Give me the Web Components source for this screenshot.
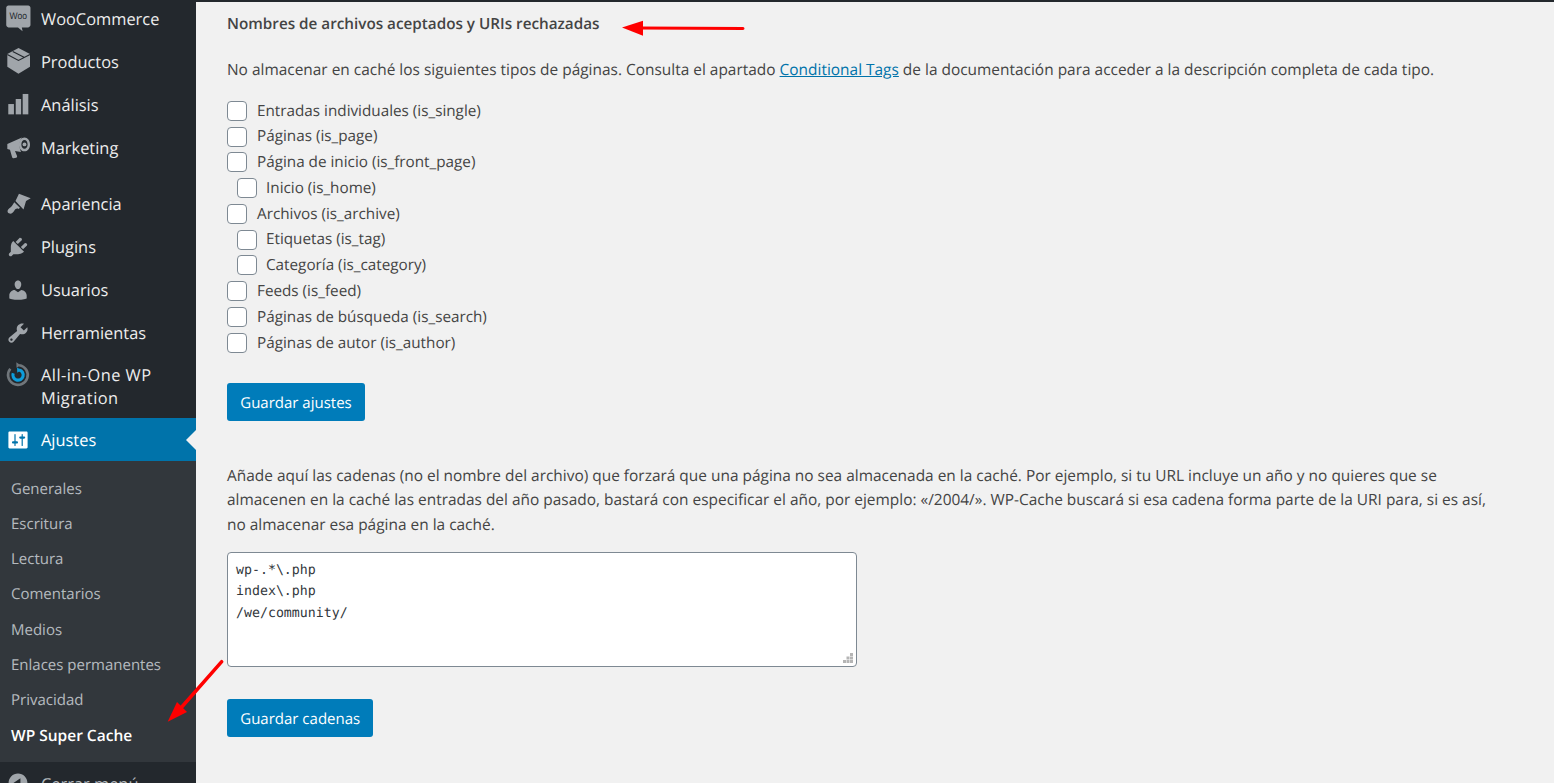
<!DOCTYPE html>
<html lang="es">
<head>
<meta charset="utf-8">
<title>WP Super Cache</title>
<style>
  html, body { margin: 0; height: 783px; overflow: hidden; background: #f1f1f1; }
  body { font-family: "Open Sans", "Noto Sans", sans-serif; text-rendering: geometricPrecision; }
</style>
</head>
<body>

<admin-page>
  <admin-menu slot="menu">
    <menu-item icon="woo">WooCommerce</menu-item>
    <menu-item icon="box">Productos</menu-item>
    <menu-item icon="bars">Análisis</menu-item>
    <menu-item icon="megaphone">Marketing</menu-item>
    <menu-item icon="brush" class="first">Apariencia</menu-item>
    <menu-item icon="plug">Plugins</menu-item>
    <menu-item icon="user">Usuarios</menu-item>
    <menu-item icon="wrench">Herramientas</menu-item>
    <menu-item icon="migrate" tall>All-in-One WP Migration</menu-item>
    <menu-item icon="sliders" active>Ajustes</menu-item>
    <sub-menu>
      <sub-item>Generales</sub-item>
      <sub-item>Escritura</sub-item>
      <sub-item>Lectura</sub-item>
      <sub-item>Comentarios</sub-item>
      <sub-item>Medios</sub-item>
      <sub-item>Enlaces permanentes</sub-item>
      <sub-item>Privacidad</sub-item>
      <sub-item current>WP Super Cache</sub-item>
    </sub-menu>
    <menu-item icon="collapse" dim>Cerrar menú</menu-item>
  </admin-menu>

  <cache-settings>
    <h-title>Nombres de archivos aceptados y URIs rechazadas</h-title>
    <p-text class="intro">No almacenar en caché los siguientes tipos de páginas. Consulta el apartado <a-link>Conditional Tags</a-link> de la documentación para acceder a la descripción completa de cada tipo.</p-text>
    <check-list>
      <check-row>Entradas individuales (is_single)</check-row>
      <check-row>Páginas (is_page)</check-row>
      <check-row>Página de inicio (is_front_page)</check-row>
      <check-row child>Inicio (is_home)</check-row>
      <check-row>Archivos (is_archive)</check-row>
      <check-row child>Etiquetas (is_tag)</check-row>
      <check-row child>Categoría (is_category)</check-row>
      <check-row>Feeds (is_feed)</check-row>
      <check-row>Páginas de búsqueda (is_search)</check-row>
      <check-row>Páginas de autor (is_author)</check-row>
    </check-list>
    <wp-button class="save-one">Guardar ajustes</wp-button>
    <p-text class="strings">Añade aquí las cadenas (no el nombre del archivo) que forzará que una página no sea almacenada en la caché. Por ejemplo, si tu URL incluye un año y no quieres que se almacenen en la caché las entradas del año pasado, bastará con especificar el año, por ejemplo: «/2004/». WP-Cache buscará si esa cadena forma parte de la URI para, si es así, no almacenar esa página en la caché.</p-text>
    <code-box>wp-.*\.php
index\.php
/we/community/</code-box>
    <wp-button class="save-two">Guardar cadenas</wp-button>
  </cache-settings>

  <red-arrows></red-arrows>
</admin-page>

<script>
//ICONS
//dashicons on a 20 box, the odd ones are drawn by hand
const ICONS = {
    woo: `<path d="M2 -1.2H18.500C19.500 -1.2 20.400 -.3 20.400 .7V15.100C20.400 16.100 19.500 17 18.500 17H13.200L13.800 20.300 10 17H2C1 17 .2 16.100 .2 15.100V.7C.2 -.3 1 -1.200 2 -1.200z"/><text x="10.200" y="10.300" text-anchor="middle" font-family="Liberation Sans" font-size="8" textLength="14.500" lengthAdjust="spacingAndGlyphs" fill="#23282d">Woo</text>`,
    box: `<path d="M10.400 -1.700L20 3.300V14L10.400 19.700 1.100 14V3.300z"/><path d="M1.100 3.800L10.400 8.700 20 3.800M5.600 1.300L15 6.100" stroke="#23282d" stroke-width="1" fill="none"/>`,
    bars: `<rect x="1.900" y="9.200" width="4.700" height="8.600"/><rect x="8.100" y="5" width="4.500" height="12.800"/><rect x="13.900" y=".8" width="4.700" height="17"/>`,
    megaphone: `<path d="M1.100 6.700L13.300 1.200C12 3.200 11.200 5.200 11.200 7.200 11.200 9.400 11.800 11.400 12.500 13.300L7.500 12.600 9.200 16.700C9.400 17.400 9.100 17.900 8.500 18.100L6.400 18.500C5.800 18.600 5.300 18.300 5.100 17.800L3.300 11.400 1.100 10.800z"/><path fill-rule="evenodd" d="M15.400 1.200C18 1.200 20 3.800 20 7S18 12.800 15.400 12.800 10.800 10.200 10.800 7 12.800 1.200 15.400 1.200zM15.400 3.400C13.900 3.400 12.800 5 12.800 7S13.900 10.600 15.400 10.600 18 9 18 7 16.900 3.400 15.400 3.400z"/><circle cx="15.400" cy="7" r="1.600"/>`,
    brush: `<path d="M10.800 1.400L20.600 5.250 16.700 7.500 14.600 14.600 7.900 7.500z"/><path d="M6.900 8.600L11.600 13.200 10.600 14.200C9 13.400 8 14 7 15.400 6 17 4.600 18.400 3 18 1.200 17.600 .8 16 1.800 14.600 3 13 5 12.200 5.600 10.600z"/>`,
    plug: `<path d="M13.110 4.360L9.870 7.600 8 5.730l3.240-3.240c.35-.34 1.050-.2 1.560.32.52.51.66 1.210.31 1.550zm-8 1.770l.91-1.120 9.010 9.010-1.190.84c-.71.71-2.630 1.160-3.820 1.160H6.140L4.900 17.260c-.59.59-1.540.59-2.120 0-.59-.58-.59-1.530 0-2.120l1.240-1.240v-3.880c0-1.130.4-3.190 1.090-3.890zm7.260 3.970l3.240-3.240c.34-.35 1.040-.21 1.550.31.52.51.66 1.210.31 1.550l-3.240 3.250z"/>`,
    user: `<path d="M10 9.250c-2.270 0-2.730-3.440-2.730-3.440C7 4.020 7.820 2 9.970 2c2.160 0 2.980 2.020 2.710 3.810 0 0-.41 3.440-2.680 3.440zm0 2.570L12.720 10c2.390 0 4.520 2.330 4.520 4.530v2.490s-3.650 1.130-7.240 1.130c-3.650 0-7.240-1.130-7.240-1.130v-2.490c0-2.250 1.940-4.480 4.470-4.480z"/>`,
    wrench: `<path d="M16.680 9.770c-1.340 1.340-3.300 1.670-4.950.99l-5.410 6.520c-.99.99-2.590.99-3.580 0s-.99-2.590 0-3.570l6.520-5.420c-.68-1.650-.35-3.610.99-4.950 1.280-1.280 3.120-1.620 4.720-1.060l-2.890 2.890 2.820 2.820 2.860-2.870c.53 1.580.18 3.390-1.080 4.670zM3.810 16.210c.4.39 1.040.39 1.430 0 .4-.4.4-1.040 0-1.430-.39-.4-1.030-.4-1.430 0-.39.39-.39 1.030 0 1.430z"/>`,
    migrate: `<path d="M11 1.900A8.200 8.200 0 1 1 3.600 4.800" fill="none" stroke="#70767b" stroke-width="2.200"/><path d="M8.600 -.6L12.200 1.800 8.800 4z" fill="#70767b"/><path d="M6 8.500A4.300 4.300 0 1 0 11 5.800" fill="none" stroke="#0d9ddb" stroke-width="2.600"/><path d="M9.200 3.800L12.800 5.900 9.400 8.200z" fill="#0d9ddb"/>`,
    sliders: `<path d="M18 16V4c0-.55-.45-1-1-1H3c-.55 0-1 .45-1 1v12c0 .55.45 1 1 1h14c.55 0 1-.45 1-1zM8 11h1c.55 0 1 .45 1 1s-.45 1-1 1H8v1.500c0 .28-.22.5-.5.5s-.5-.22-.5-.5V13H6c-.55 0-1-.45-1-1s.45-1 1-1h1V5.500c0-.28.22-.5.5-.5s.5.22.5.5V11zm5-2h-1c-.55 0-1-.45-1-1s.45-1 1-1h1V5.500c0-.28.22-.5.5-.5s.5.22.5.5V7h1c.55 0 1 .45 1 1s-.45 1-1 1h-1v5.500c0 .28-.22.5-.5.5s-.5-.22-.5-.5V9z"/>`,
    collapse: `<path d="M10 2.160c4.330 0 7.840 3.510 7.840 7.840s-3.510 7.840-7.840 7.840S2.160 14.330 2.160 10 5.710 2.160 10 2.160zm2 11.720V6.120L6.180 9.970z"/>`
};

//PAGE SHELL
class AdminPage extends HTMLElement {
    constructor() {
        super();
        this.attachShadow({ mode: "open" });
        this.shadowRoot.innerHTML = `
        <style>
            :host { display: block; position: relative; height: 783px; overflow: hidden; }
            .shell { display: flex; height: 100%; }
        </style>
        <div class="shell">
            <slot name="menu"></slot>
            <slot></slot>
        </div>`;
    }
}

//SIDEBAR
class AdminMenu extends HTMLElement {
    constructor() {
        super();
        this.attachShadow({ mode: "open" });
        this.shadowRoot.innerHTML = `
        <style>
            :host { display: block; flex: 0 0 196px; width: 196px; height: 783px; overflow: hidden; background: #23282d; }
            .list { margin-top: -3px; }
            ::slotted(.first) { margin-top: 13px; }
        </style>
        <div class="list"><slot></slot></div>`;
    }
}

class MenuItem extends HTMLElement {
    constructor() {
        super();
        this.attachShadow({ mode: "open" });
    }
    connectedCallback() {
        const icon = ICONS[this.getAttribute("icon")] || "";
        this.shadowRoot.innerHTML = `
        <style>
            :host { display: flex; align-items: center; min-height: 43px; color: #eee; font-size: 16.4px; line-height: 23px; }
            :host([active]) { background: #0073aa; color: #fff; position: relative; }
            :host([active])::after { content: ""; position: absolute; right: 0; top: 50%; margin-top: -10px;
                border: 10px solid transparent; border-right-color: #f1f1f1; border-left: 0; }
            :host([dim]) { color: #b4b9be; }
            :host([tall]) { min-height: 64px; align-items: flex-start; letter-spacing: .45px; }
            :host([tall]) svg { margin-top: 8.5px; }
            :host([tall]) .label { margin-top: 8.5px; }
            svg { flex: 0 0 24px; width: 24px; height: 24px; margin-left: 6px; fill: #a0a5aa; overflow: visible; }
            :host([active]) svg { fill: #fff; }
            .label { margin-left: 11px; padding: 0 14px 0 0; }
        </style>
        <svg viewBox="0 0 20 20">${icon}</svg>
        <span class="label"><slot></slot></span>`;
    }
}

class SubMenu extends HTMLElement {
    constructor() {
        super();
        this.attachShadow({ mode: "open" });
        this.shadowRoot.innerHTML = `
        <style>
            :host { display: block; background: #32373c; padding: 10.5px 0 8px; }
        </style>
        <slot></slot>`;
    }
}

class SubItem extends HTMLElement {
    constructor() {
        super();
        this.attachShadow({ mode: "open" });
        this.shadowRoot.innerHTML = `
        <style>
            :host { display: block; height: 35.25px; line-height: 35px; padding-left: 11px; font-size: 15px; color: rgba(240,245,250,.7); }
            :host([current]) { color: #fff; font-weight: 600; font-size: 15.5px; }
        </style>
        <slot></slot>`;
    }
}

//CONTENT
class CacheSettings extends HTMLElement {
    constructor() {
        super();
        this.attachShadow({ mode: "open" });
        this.shadowRoot.innerHTML = `
        <style>
            :host { display: block; flex: 1; min-width: 0; border-top: 2px solid #23282d; padding: 0 60px 0 31px; color: #444; font-size: 15.44px; line-height: 24.5px; }
            ::slotted(.intro) { display: block; margin-top: 20.5px; }
            ::slotted(check-list) { margin-top: 17px; }
            ::slotted(.save-one) { margin-top: 26.9px; }
            ::slotted(.strings) { display: block; margin-top: 42px; }
            ::slotted(code-box) { margin-top: 16px; }
            ::slotted(.save-two) { margin-top: 32px; }
        </style>
        <slot></slot>`;
    }
}

class HTitle extends HTMLElement {
    constructor() {
        super();
        this.attachShadow({ mode: "open" });
        this.shadowRoot.innerHTML = `
        <style>
            :host { display: block; margin-top: 9.5px; font-size: 15.25px; font-weight: 600; color: #444; }
        </style>
        <slot></slot>`;
    }
}

class PText extends HTMLElement {
    constructor() {
        super();
        this.attachShadow({ mode: "open" });
        this.shadowRoot.innerHTML = `
        <style>
            :host { display: block; }
        </style>
        <slot></slot>`;
    }
}

class ALink extends HTMLElement {
    constructor() {
        super();
        this.attachShadow({ mode: "open" });
        this.shadowRoot.innerHTML = `
        <style>
            :host { color: #0073aa; text-decoration: underline; }
        </style>
        <slot></slot>`;
    }
}

class CheckList extends HTMLElement {
    constructor() {
        super();
        this.attachShadow({ mode: "open" });
        this.shadowRoot.innerHTML = `
        <style>
            :host { display: flex; flex-direction: column; font-size: 15.27px; }
        </style>
        <slot></slot>`;
    }
}

class CheckRow extends HTMLElement {
    constructor() {
        super();
        this.attachShadow({ mode: "open" });
        this.shadowRoot.innerHTML = `
        <style>
            :host { display: flex; align-items: center; gap: 10px; height: 25.78px; }
            :host([child]) { padding-left: 9.5px; gap: 9.5px; }
            .box { box-sizing: border-box; width: 20px; height: 20px; border: 1px solid #7e8993; border-radius: 4px; background: #fff; }
        </style>
        <span class="box"></span>
        <span><slot></slot></span>`;
    }
}

class WpButton extends HTMLElement {
    constructor() {
        super();
        this.attachShadow({ mode: "open" });
        this.shadowRoot.innerHTML = `
        <style>
            :host { display: block; width: fit-content; background: #007cba; color: #fff; border-radius: 3px; padding: 0 13.25px; height: 38px; line-height: 41px; font-size: 15px; }
        </style>
        <slot></slot>`;
    }
}

class CodeBox extends HTMLElement {
    constructor() {
        super();
        this.attachShadow({ mode: "open" });
        this.shadowRoot.innerHTML = `
        <style>
            :host { display: block; position: relative; box-sizing: border-box; width: 630px; height: 115px; padding: 6.5px 8px; background: #fff; border: 1px solid #7e8993; border-radius: 4px;
                font-family: "DejaVu Sans Mono", monospace; font-size: 13.25px; line-height: 21.5px; color: #32373c; }
            .text { white-space: pre; }
            svg { position: absolute; right: 2px; bottom: 2px; width: 11px; height: 11px; fill: #b5b5b5; }
        </style>
        <div class="text"><slot></slot></div>
        <svg viewBox="0 0 11 11"><rect x="7" y="0" width="3" height="3"/><rect x="3.500" y="3.500" width="3" height="3"/><rect x="7" y="3.500" width="3" height="3"/><rect x="0" y="7" width="3" height="3"/><rect x="3.500" y="7" width="3" height="3"/><rect x="7" y="7" width="3" height="3"/></svg>`;
    }
}

//the red arrows drawn over the screenshot
class RedArrows extends HTMLElement {
    constructor() {
        super();
        this.attachShadow({ mode: "open" });
        this.shadowRoot.innerHTML = `
        <style>
            :host { position: absolute; inset: 0; pointer-events: none; }
            svg { width: 100%; height: 100%; display: block; }
        </style>
        <svg viewBox="0 0 1554 783">
            <path d="M743 28.500L640 28" stroke="#f00" stroke-width="3" stroke-linecap="round" fill="none"/>
            <path d="M622 27.500L643 20.700V35.700z" fill="#f00"/>
            <path d="M221.700 661.700L180 709" stroke="#f00" stroke-width="3.500" stroke-linecap="round" fill="none"/>
            <path d="M167.700 721.700L177 702L187 712z" fill="#f00"/>
        </svg>`;
    }
}

customElements.define("admin-page", AdminPage);
customElements.define("admin-menu", AdminMenu);
customElements.define("menu-item", MenuItem);
customElements.define("sub-menu", SubMenu);
customElements.define("sub-item", SubItem);
customElements.define("cache-settings", CacheSettings);
customElements.define("h-title", HTitle);
customElements.define("p-text", PText);
customElements.define("a-link", ALink);
customElements.define("check-list", CheckList);
customElements.define("check-row", CheckRow);
customElements.define("wp-button", WpButton);
customElements.define("code-box", CodeBox);
customElements.define("red-arrows", RedArrows);
</script>
</body>
</html>
